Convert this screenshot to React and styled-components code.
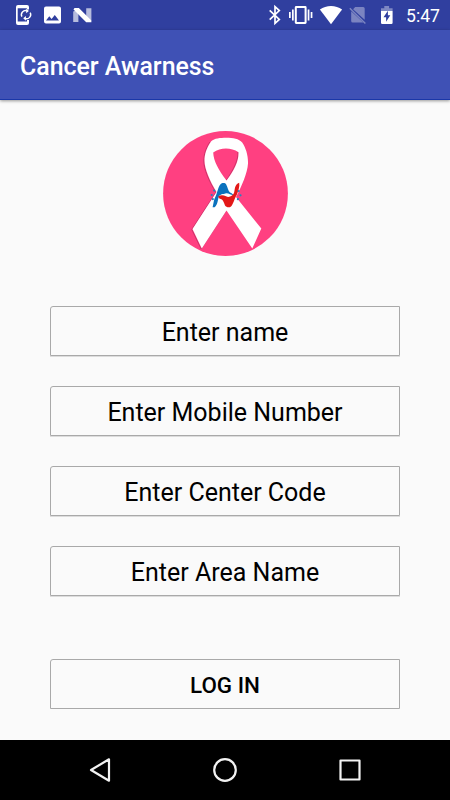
import React from "react";
import styled, { createGlobalStyle } from "styled-components";

const GlobalStyle = createGlobalStyle`
  * {
    box-sizing: border-box;
  }
  body {
    margin: 0;
    background: #fafafa;
    font-family: Roboto, "Liberation Sans", sans-serif;
  }
`;

const Screen = styled.div`
  display: flex;
  flex-direction: column;
  width: 450px;
  height: 800px;
  overflow: hidden;
  background: #fafafa;
`;

const StatusBar = styled.div`
  display: flex;
  justify-content: space-between;
  flex: none;
  height: 30px;
  background: #303f9f;
`;

const StatusGroup = styled.div`
  display: flex;
  align-items: center;
`;

const Glyph = styled.svg`
  display: block;
  flex: none;
  width: ${(props) => props.$width}px;
  height: 30px;
  fill: #fff;
`;

const Clock = styled.span`
  width: 44px;
  padding-top: 2px;
  color: #fff;
  font-size: 17.6px;
  font-weight: 400;
  line-height: 28px;
`;

const AppBar = styled.header`
  display: flex;
  align-items: center;
  flex: none;
  height: 70px;
  padding: 4px 20px 0;
  background: #3f51b5;
  border-bottom: 1px solid #1a37a8;
  box-shadow: 0 1px 3px rgba(0, 0, 0, 0.4);
`;

const Title = styled.h1`
  margin: 0;
  color: #fff;
  font-size: 24.9px;
  font-weight: 500;
`;

const Content = styled.main`
  display: flex;
  flex-direction: column;
  align-items: center;
  flex: 1;
  padding-top: 31px;
`;

const Logo = styled.svg`
  display: block;
  width: 125px;
  height: 125px;
`;

const Form = styled.form`
  display: flex;
  flex-direction: column;
  gap: 30px;
  width: 350px;
  margin-top: 50px;
`;

const Field = styled.div`
  display: flex;
  align-items: center;
  justify-content: center;
  height: 50px;
  padding-top: 4px;
  border: 1px solid #a9a9a9;
  border-radius: 3px 0 0 0;
  box-shadow: 0 1px 0 #dcdcdc;
  color: #000;
  font-size: 25px;
  line-height: 30px;
`;

const LoginButton = styled.button`
  height: 50px;
  margin-top: 33px;
  padding: 1px 0 0;
  border: 1px solid #a9a9a9;
  border-radius: 3px 0 0 0;
  background: transparent;
  color: #000;
  font-family: inherit;
  font-size: 22.4px;
  font-weight: 500;
`;

const NavBar = styled.nav`
  display: flex;
  align-items: center;
  justify-content: center;
  gap: 95px;
  flex: none;
  height: 60px;
  background: #000;
`;

const NavIcon = styled.svg`
  display: block;
  width: 30px;
  height: 30px;
  fill: none;
  stroke: #f2f2f2;
  stroke-width: 2.2;
  stroke-linejoin: round;
`;

const fields = [
  "Enter name",
  "Enter Mobile Number",
  "Enter Center Code",
  "Enter Area Name",
];

const NotificationIcons = () => (
  <StatusGroup>
    <Glyph $width={38} viewBox="0 0 38 30">
      <path
        fillRule="evenodd"
        d="M18 5h9a2 2 0 0 1 2 2v2.5h-2V8.3h-9.3v13.3H27V20h2v3a2 2 0 0 1-2 2h-9a2 2 0 0 1-2-2V7a2 2 0 0 1 2-2z"
      />
      <path
        d="M21.9 16.7a4.2 4.2 0 0 1 5.2-5.9M30.2 12.6a4.2 4.2 0 0 1-5.2 5.9"
        fill="none"
        stroke="#fff"
        strokeWidth="1.4"
      />
      <path d="M26.2 8.5v4.8l2.7-2.4zM25.9 15.9v4.8l-2.7-2.4z" />
    </Glyph>
    <Glyph $width={30} viewBox="38 0 30 30">
      <path
        fillRule="evenodd"
        d="M46 6.5h13a2 2 0 0 1 2 2v13a2 2 0 0 1-2 2H46a2 2 0 0 1-2-2v-13a2 2 0 0 1 2-2zM46 20.5h13l-4.2-5.6-3.2 4.1-2.3-2.7z"
      />
    </Glyph>
    <Glyph $width={28} viewBox="68 0 28 30">
      <path
        d="M73.2 11.5l5.2-2v12.4h-5.2zM86.2 8.2h5.2v11.7l-5.2 2z"
        opacity=".65"
      />
      <path d="M74.5 8h4.4l12.5 12.5v1.7h-5.2L73.5 9.5z" />
    </Glyph>
  </StatusGroup>
);

const SystemIcons = () => (
  <StatusGroup>
    <Glyph $width={21} viewBox="264 0 21 30">
      <path
        d="M269.7 10.3l9.6 9.1-4.3 4V6.6l4.3 4-9.6 9.1"
        fill="none"
        stroke="#fff"
        strokeWidth="1.7"
      />
    </Glyph>
    <Glyph $width={31} viewBox="285 0 31 30">
      <path
        fillRule="evenodd"
        d="M296.2 6h9a1.4 1.4 0 0 1 1.4 1.4v15.2a1.4 1.4 0 0 1-1.4 1.4h-9a1.4 1.4 0 0 1-1.4-1.4V7.4a1.4 1.4 0 0 1 1.4-1.4zM296.8 8v14h7.8V8z"
      />
      <path d="M292 9.5h1.7v11H292zM289 12h1.7v6H289zM307.7 9.5h1.7v11h-1.7zM310.7 12h1.7v6h-1.7z" />
    </Glyph>
    <Glyph $width={30} viewBox="316 0 30 30">
      <path d="M331 24.2L319.9 9.5C323.1 7.2 327 6 331 6s7.9 1.2 11.1 3.5z" />
    </Glyph>
    <Glyph $width={26} viewBox="346 0 26 30">
      <g opacity=".36">
        <path d="M355.2 7h8a1.5 1.5 0 0 1 1.5 1.5v11.3L353.1 9.3z" />
        <path d="M351.2 11.2L363.3 22.4H352.7a1.5 1.5 0 0 1-1.5-1.5z" />
        <path
          d="M349.8 8.3L365.4 23.6"
          fill="none"
          stroke="#fff"
          strokeWidth="1.4"
        />
      </g>
    </Glyph>
    <Glyph $width={34} viewBox="372 0 34 30">
      <path d="M381 11V8.2h3.3V6h4.8v2.2h3.5V11z" opacity=".38" />
      <path
        fillRule="evenodd"
        d="M381 11h11.6v11.8a1.2 1.2 0 0 1-1.2 1.2h-9.2a1.2 1.2 0 0 1-1.2-1.2zM387.9 10.8l-4.4 6.5h2.6v4.5l4.2-6.5h-2.4z"
      />
    </Glyph>
    <Clock>5:47</Clock>
  </StatusGroup>
);

const RibbonLogo = () => (
  <Logo viewBox="163 131 125 125">
    <circle cx="225.5" cy="193.5" r="62.4" fill="#ff4081" />
    {/* soft edge behind the ribbon */}
    <g
      transform="translate(-.7 .5)"
      fill="none"
      stroke="#8d2850"
      strokeWidth="1"
      opacity=".45"
    >
      <path d="M210.5 141.5C206.5 148 204.5 154 204.5 160.5C204.5 169 210 181 216.5 192L192.5 229L201.8 248.5L226.5 210.5" />
      <path d="M238.6 151.5C239.2 159 235 168 226.5 180.5" />
    </g>
    <path
      fill="#fff"
      fillRule="evenodd"
      d="M211.2 141.2C214.5 138.3 220 137.7 226.3 137.7C233 137.7 239 138.7 242.2 142.5C246 148 248.3 156 248 163.5C247.5 173 241.5 186.5 236 197L261.3 228.5L252.3 248.5L226.5 210.5L201.8 248.5L192.5 229L216.5 192C210 181 204.5 169 204.5 160.5C204.5 154 206.5 148 211.2 141.2ZM213.2 152.5C213.6 161 218.2 169.5 226.5 180.5C234.8 170 238.8 161 238.5 152.2C231 147.2 220.5 147.2 213.2 152.5Z"
    />
    <path
      fill="#0b72bd"
      d="M220.5 184.2C222 182.4 225.2 182.6 226.2 184.4C227.5 187 228.2 190.5 230 192.6C231.7 193.2 233.2 194.2 233.3 195.4C230.8 195 228.5 192.9 225.5 193.4C223 194 220 194 218.8 196.5C217.8 199.7 217.7 205 214.6 207.2H212.6C213.5 203.8 213.8 199.5 215.2 197.2C217.3 193.3 217.8 187.3 220.5 184.2Z"
    />
    <path
      fill="#e31818"
      d="M218.2 196.5C220.5 194.8 223.2 195 226 196.3C229 198.4 232.7 195.7 234 193.1C235 189.6 234.6 184.2 239.2 182.8C239.9 186.8 238.3 191 236.7 195C234.6 198 233.5 204 231 206.5C229.1 208 226.2 207.4 225 205.5C224 203 223.3 200.2 221 199.1C219.3 198.6 218.2 197.6 218.2 196.5Z"
    />
    <g fill="#2482bd">
      <circle cx="214.2" cy="190.6" r="1.1" />
      <circle cx="211.7" cy="195" r="1.1" />
      <circle cx="212.8" cy="199.2" r="1.1" />
      <circle cx="238.6" cy="191" r="1.1" />
      <circle cx="240.5" cy="195.3" r="1.1" />
      <circle cx="237.9" cy="199.2" r="1.1" />
    </g>
  </Logo>
);

const App = () => {
  return (
    <>
      <GlobalStyle />
      <Screen>
        <StatusBar>
          <NotificationIcons />
          <SystemIcons />
        </StatusBar>
        <AppBar>
          <Title>Cancer Awarness</Title>
        </AppBar>
        <Content>
          <RibbonLogo />
          <Form>
            {fields.map((label) => (
              <Field key={label}>{label}</Field>
            ))}
            <LoginButton type="button">LOG IN</LoginButton>
          </Form>
        </Content>
        <NavBar>
          <NavIcon viewBox="0 0 30 30">
            <path d="M24 4.3v21.4L6 15z" />
          </NavIcon>
          <NavIcon viewBox="0 0 30 30">
            <circle cx="15" cy="15" r="10.8" />
          </NavIcon>
          <NavIcon viewBox="0 0 30 30">
            <rect x="5.5" y="5.5" width="19" height="19" />
          </NavIcon>
        </NavBar>
      </Screen>
    </>
  );
};

export default App;
